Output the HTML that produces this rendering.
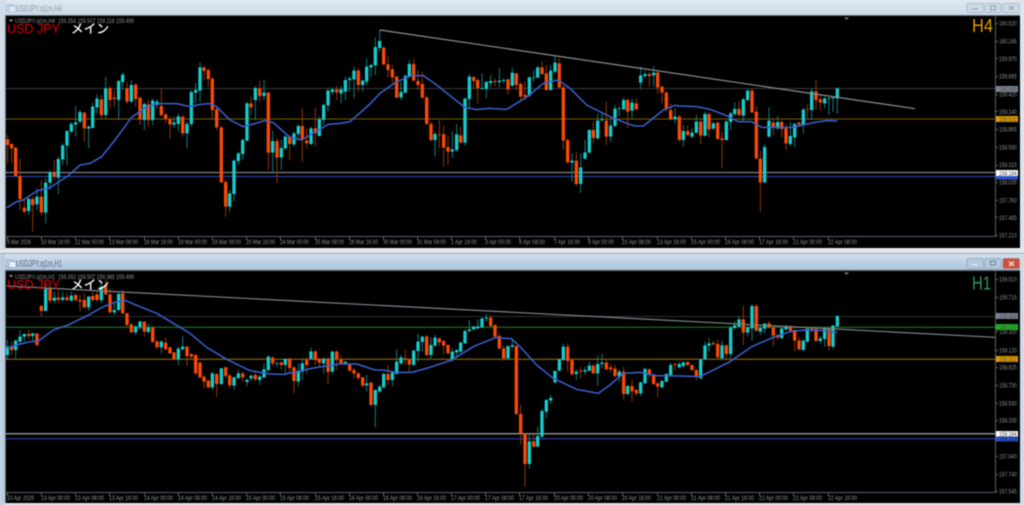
<!DOCTYPE html>
<html><head><meta charset="utf-8"><style>
html,body{margin:0;padding:0;width:1024px;height:505px;overflow:hidden;background:#e4e8ec}
svg{display:block;filter:blur(.4px)}
text{font-family:"Liberation Sans","Noto Sans CJK JP",sans-serif}
.ax{font-size:6.6px;fill:#8f8f8f}
.tg{font-size:6.6px;fill:#444}
.w{fill:none;stroke-width:2.6}
.b{fill:none;stroke-width:10}
.wo{stroke:#a83c05}.wc{stroke:#0f8f90}.bo{stroke:#fb4a05}.bc{stroke:#16cccc}
.ma{fill:none;stroke:#3a5fd0;stroke-width:4.6;stroke-linejoin:round}
</style></head><body>
<svg width="1024" height="505" viewBox="0 0 1024 505" xmlns="http://www.w3.org/2000/svg">
<defs>
<linearGradient id="t1" x1="0" y1="0" x2="0" y2="1"><stop offset="0" stop-color="#dfe8f1"/><stop offset="1" stop-color="#c9d8e7"/></linearGradient>
<linearGradient id="t2" x1="0" y1="0" x2="0" y2="1"><stop offset="0" stop-color="#d3e1ef"/><stop offset="1" stop-color="#a9c3dd"/></linearGradient>
</defs>
<rect width="1024" height="505" fill="#e6e9ec"/>
<!-- window 1 -->
<rect x="0" y="0" width="1024" height="16" fill="url(#t1)"/>
<rect x="0" y="0" width="6" height="250" fill="#cfdbe7"/>
<rect x="1020" y="0" width="4" height="250" fill="#dde5ed"/>
<rect x="5" y="15" width="1015" height="233" fill="#000"/>
<rect x="5" y="15" width="1015" height="1" fill="#6b6f74"/>
<rect x="5" y="15" width="1" height="233" fill="#6b6f74"/>
<rect x="6.5" y="4.5" width="7" height="7" rx="1" fill="#c5d8ec" stroke="#a5bdd5" stroke-width=".8"/>
<rect x="9" y="6" width="7" height="6" rx="1" fill="#dbe8f4" stroke="#a5bdd5" stroke-width=".8"/>
<text x="16" y="11.500" font-size="9" fill="#8f9ba8" textLength="46" lengthAdjust="spacingAndGlyphs">USDJPY.oj1m,H4</text>
<g fill="#ccd9e6" stroke="#a5b4c4" stroke-width=".7">
<rect x="967" y="3.500" width="16.500" height="9" rx="1.500"/><rect x="985" y="3.500" width="16" height="9" rx="1.500"/><rect x="1003" y="3.500" width="16.500" height="9" rx="1.500"/>
</g>
<g fill="none" stroke="#8b98a6" stroke-width=".9"><path d="M972 9h6"/><rect x="990.500" y="6" width="5" height="4"/><path d="M1009 6l5 4M1014 6l-5 4"/></g>
<!-- window 2 frame -->
<rect x="0" y="252" width="1024" height="253" fill="#d9e3ec"/>
<rect x="0" y="253" width="1024" height="1" fill="#a8acb0"/>
<rect x="0" y="254" width="1024" height="16" fill="url(#t2)"/>
<rect x="0" y="254" width="5" height="251" fill="#b9cde0"/>
<rect x="1020" y="254" width="4" height="251" fill="#cfdce8"/>
<rect x="5" y="270" width="1015" height="233" fill="#000"/>
<rect x="5" y="270" width="1015" height="1.200" fill="#4d5158"/>
<rect x="5" y="270" width="1" height="233" fill="#5e6268"/>
<rect x="6.500" y="260" width="7" height="7" rx="1" fill="#bcd3ea" stroke="#8fa9c4" stroke-width=".8"/>
<rect x="9" y="261.500" width="7" height="6" rx="1" fill="#eaf1f8" stroke="#8fa9c4" stroke-width=".8"/>
<text x="16" y="266.500" font-size="9" fill="#566678" textLength="46" lengthAdjust="spacingAndGlyphs">USDJPY.oj1m,H1</text>
<rect x="967" y="258.500" width="16.500" height="10" rx="1.500" fill="#b5cade" stroke="#8fa3b7" stroke-width=".7"/>
<rect x="985" y="258.500" width="16" height="10" rx="1.500" fill="#b5cade" stroke="#8fa3b7" stroke-width=".7"/>
<rect x="1003" y="258.500" width="16.500" height="10" rx="1.500" fill="#c9513c" stroke="#a8796e" stroke-width=".7"/>
<g fill="none" stroke-width=".9"><path d="M972 264.500h6" stroke="#eef2f6"/><rect x="990.500" y="261" width="5" height="4" stroke="#6c7c8c"/><path d="M1009 261.500l5 4.500M1014 261.500l-5 4.500" stroke="#f3e3df" stroke-width="1.300"/></g>

<!-- chart 1 horizontal lines -->
<g shape-rendering="crispEdges">
<rect x="6" y="88" width="989" height="1" fill="#3a3a3a"/>
<rect x="6" y="118.500" width="989" height="1.200" fill="#7a5c06"/>
<rect x="6" y="172" width="989" height="1.200" fill="#9a9a9a"/>
<rect x="6" y="176" width="989" height="1" fill="#2b49b0"/>
</g>

<!-- chart 1 A -->
<g transform="scale(.33333)">
<path class="w wo" d="M23 405V490M35 430V490M47 440V528M60 475V630M73 595V640M98 590V695M124 540V645M163 480V540M253 335V425M304 285V358M330 258V325M343 270V320M381 245V312M407 250V320M420 290V375M445 300V380M484 265V350M497 340V370M510 350V415M548 345V410M612 198V240M625 205V260M637 232V355M650 320V390M664 378V550M677 540V650M753 290V345M779 243V305M805 276V510M831 415V550M869 405V480M907 325V485M920 385V445M946 323V440M1010 258V300"/>
<path class="w wc" d="M86 590V645M111 565V630M137 535V670M150 510V570M175 470V582M188 430V495M201 390V495M214 365V400M227 318V410M240 330V370M266 375V445M278 308V385M291 283V340M317 230V355M356 240V360M368 218V270M394 240V310M433 308V390M458 295V375M471 298V325M522 350V385M535 340V395M561 365V445M574 270V380M587 250V310M600 188V305M689 570V635M702 478V603M715 455V495M728 415V480M741 305V425M766 258V360M792 238V300M818 393V520M844 420V510M856 405V450M882 395V440M895 372V420M933 380V435M958 350V410M971 310V375M984 265V335M997 262V285"/>
<path class="b bo" d="M23 418V435M35 432V445M47 443V528M60 528V597M73 623V635M98 597V615M124 590V637M163 517V530M253 338V385M304 298V345M330 264V300M343 293V297M381 265V305M407 254V297M420 293V358M445 313V360M484 318V345M497 343V357M510 357V373M548 350V400M612 202V213M625 210V237M637 236V330M650 328V382M664 382V547M677 546V620M753 310V322M779 265V288M805 278V458M831 423V473M869 410V432M907 378V420M920 422V430M946 385V400M1010 268V277"/>
<path class="b bc" d="M86 597V633M111 590V613M137 548V638M150 517V548M175 477V533M188 436V478M201 393V437M214 372V395M227 367V374M240 336V365M266 380V386M278 320V384M291 296V322M317 265V345M356 243V300M368 224V246M394 255V305M433 312V360M458 302V360M471 305V315M522 368V374M535 349V372M561 372V400M574 276V372M587 270V278M600 202V272M689 580V620M702 482V582M715 460V483M728 420V462M741 310V422M766 264V300M792 278V288M818 423V458M844 444V472M856 410V445M882 400V433M895 378V402M933 385V432M958 358V408M971 315V360M984 272V316M997 268V276"/>
</g>
<!-- chart 1 B -->
<g transform="translate(340,0) scale(.33333)">
<path class="w wo" d="M55 205V275M131 140V195M144 168V232M157 195V250M170 225V295M221 175V245M234 210V270M247 215V296M260 285V375M273 365V425M298 360V445M311 378V500M324 410V495M362 380V430M401 228V265M413 235V310M465 235V260M504 235V283M529 218V270M542 245V305M555 245V300M606 185V225M619 195V272M658 175V265M670 258V450M683 415V490M709 455V558M760 365V430M799 305V435M863 295V385M889 295V330M928 215V260M953 215V282M966 258V310M979 275V335M992 310V362M1018 345V425"/>
<path class="w wc" d="M3 258V310M16 230V300M29 230V275M42 200V295M68 238V275M80 175V255M93 190V230M106 113V225M119 90V155M183 245V300M196 222V280M208 180V232M285 395V470M337 395V475M350 372V455M375 293V437M388 222V325M426 220V268M439 243V295M452 225V262M478 205V262M491 235V250M517 203V260M568 228V290M581 210V245M593 198V235M632 195V272M645 168V220M696 460V545M722 460V578M735 420V478M748 388V460M773 340V418M786 340V365M812 355V425M825 315V380M838 320V350M851 292V330M876 295V357M902 200V268M915 212V235M941 198V260M1005 325V370"/>
<path class="b bo" d="M55 212V255M131 143V193M144 193V210M157 208V232M170 230V293M221 192V242M234 243V255M247 252V293M260 292V372M273 372V420M298 403V405M311 403V443M324 441V455M362 406V428M401 231V243M413 240V264M465 243V246M504 238V268M529 220V255M542 252V290M555 285V290M606 202V222M619 220V270M658 190V262M670 262V422M683 420V487M709 482V552M760 390V414M799 362V410M863 300V335M889 310V328M928 222V228M953 218V262M966 260V278M979 278V328M992 330V358M1018 350V420"/>
<path class="b bc" d="M3 268V280M16 240V275M29 235V240M42 212V238M68 242V255M80 200V245M93 195V202M106 141V196M119 123V144M183 276V292M196 228V278M208 192V230M285 402V420M337 448V455M350 403V450M375 296V428M388 230V297M426 264V267M439 246V267M452 243V249M478 242V246M491 240V243M517 218V257M568 232V288M581 231V233M593 202V233M632 212V270M645 188V215M696 482V488M722 502V552M735 457V476M748 390V458M773 362V415M786 359V361M812 377V410M825 326V378M838 324V326M851 300V328M876 308V332M902 226V248M915 222V228M941 218V226M1005 350V358"/>
</g>
<!-- chart 1 C -->
<g transform="translate(680,0) scale(.33333)">
<path class="w wo" d="M23 375V410M62 360V432M87 338V412M113 365V420M126 395V505M177 305V350M216 265V340M229 318V478M241 452V635M280 355V405M305 360V412M318 372V450M357 365V378M382 312V358M408 238V328M421 285V332"/>
<path class="w wc" d="M10 375V440M36 385V415M49 345V402M75 335V410M100 365V390M139 360V422M152 335V390M164 307V348M190 292V365M203 268V303M254 433V550M267 322V412M293 348V390M331 365V438M344 368V442M370 322V402M395 265V360M434 290V325M447 292V345M459 292V335M472 262V342"/>
<path class="b bo" d="M23 393V405M62 365V407M87 342V388M113 368V417M126 415V420M177 327V345M216 272V337M229 335V475M241 476V547M280 368V380M305 366V387M318 385V430M357 368V374M382 327V329M408 274V300M421 298V307"/>
<path class="b bc" d="M10 393V420M36 398V410M49 365V398M75 342V407M100 370V386M139 365V420M152 340V366M164 327V342M190 298V347M203 272V300M254 441V547M267 362V410M293 366V385M331 408V432M344 372V412M370 329V373M395 274V330M434 295V310M447 294V296M459 293V295M472 265V295"/>
</g>
<!-- chart 1 MA -->
<g transform="scale(.33333)"><path class="ma" d="M20 623L50 605L70 600L110 573L150 563L205 527L240 495L270 490L305 470L345 420L395 352L440 320L480 311L530 311L570 320L600 313L630 311L650 320L690 360L730 380L760 372L795 362L820 368L870 412L905 420L930 405L985 373L1020 370L1050 365L1110 312L1140 280L1190 245L1235 227L1270 227L1310 255L1360 295L1395 322L1430 329L1465 325L1520 328L1550 310L1585 288L1630 250L1675 240L1710 265L1760 315L1830 350L1880 370L1905 378L1930 378L1990 330L2025 316L2040 318L2090 320L2130 328L2180 347L2215 365L2255 365L2285 382L2380 382L2440 368L2480 362L2512 363"/></g>
<!-- trendline -->
<line x1="380" y1="30" x2="915" y2="108.700" stroke="#8a8f96" stroke-width="1.200"/>

<!-- chart 1 axes -->
<g shape-rendering="crispEdges" fill="#5a5f65">
<rect x="995" y="16" width="1" height="220"/><rect x="6" y="236" width="990" height="1"/>
<path d="M995 23h3v1h-3zM995 41h3v1h-3zM995 58h3v1h-3zM995 76h3v1h-3zM995 94h3v1h-3zM995 111h3v1h-3zM995 129h3v1h-3zM995 147h3v1h-3zM995 165h3v1h-3zM995 182h3v1h-3zM995 200h3v1h-3zM995 217h3v1h-3zM995 235h3v1h-3z"/>
<path d="M7 237h1v3H7zM41 237h1v3h-1zM75 237h1v3h-1zM109 237h1v3h-1zM144 237h1v3h-1zM178 237h1v3h-1zM212 237h1v3h-1zM246 237h1v3h-1zM280 237h1v3h-1zM315 237h1v3h-1zM349 237h1v3h-1zM383 237h1v3h-1zM417 237h1v3h-1zM451 237h1v3h-1zM485 237h1v3h-1zM519 237h1v3h-1zM554 237h1v3h-1zM588 237h1v3h-1zM622 237h1v3h-1zM657 237h1v3h-1zM691 237h1v3h-1zM725 237h1v3h-1zM759 237h1v3h-1zM793 237h1v3h-1zM828 237h1v3h-1z"/>
</g>
<g class="ax" lengthAdjust="spacingAndGlyphs">
<text x="999" y="25.500" textLength="17.700" lengthAdjust="spacingAndGlyphs">160.520</text><text x="999" y="43.500" textLength="17.700" lengthAdjust="spacingAndGlyphs">160.245</text><text x="999" y="61" textLength="17.700" lengthAdjust="spacingAndGlyphs">159.970</text><text x="999" y="78.500" textLength="17.700" lengthAdjust="spacingAndGlyphs">159.695</text><text x="999" y="96.500" textLength="17.700" lengthAdjust="spacingAndGlyphs">159.420</text><text x="999" y="114" textLength="17.700" lengthAdjust="spacingAndGlyphs">159.140</text><text x="999" y="131.500" textLength="17.700" lengthAdjust="spacingAndGlyphs">158.865</text><text x="999" y="149.500" textLength="17.700" lengthAdjust="spacingAndGlyphs">158.590</text><text x="999" y="167" textLength="17.700" lengthAdjust="spacingAndGlyphs">158.315</text><text x="999" y="184.500" textLength="17.700" lengthAdjust="spacingAndGlyphs">158.035</text><text x="999" y="202.500" textLength="17.700" lengthAdjust="spacingAndGlyphs">157.760</text><text x="999" y="220" textLength="17.700" lengthAdjust="spacingAndGlyphs">157.485</text><text x="999" y="237.500" textLength="17.700" lengthAdjust="spacingAndGlyphs">157.210</text>
</g>
<rect x="996" y="86" width="22" height="6" fill="#7b8794"/><text x="999" y="91.300" class="tg" textLength="17.700" lengthAdjust="spacingAndGlyphs">159.499</text>
<rect x="996" y="116" width="22" height="6" fill="#e39c00"/><text x="999" y="121.300" class="tg" textLength="17.700" lengthAdjust="spacingAndGlyphs">159.022</text>
<rect x="996" y="170" width="22" height="6" fill="#fff"/><text x="999" y="175.300" class="tg" textLength="17.700" lengthAdjust="spacingAndGlyphs">158.184</text>
<rect x="996" y="176" width="22" height="3.500" fill="#2a52c5"/>
<g class="ax">
<text x="7" y="244" textLength="24" lengthAdjust="spacingAndGlyphs">9 Mar 2026</text><text x="41" y="244" textLength="29" lengthAdjust="spacingAndGlyphs">10 Mar 16:00</text><text x="75" y="244" textLength="29" lengthAdjust="spacingAndGlyphs">12 Mar 00:00</text><text x="109" y="244" textLength="29" lengthAdjust="spacingAndGlyphs">13 Mar 08:00</text><text x="144" y="244" textLength="29" lengthAdjust="spacingAndGlyphs">16 Mar 16:00</text><text x="178" y="244" textLength="29" lengthAdjust="spacingAndGlyphs">18 Mar 00:00</text><text x="212" y="244" textLength="29" lengthAdjust="spacingAndGlyphs">19 Mar 08:00</text><text x="246" y="244" textLength="29" lengthAdjust="spacingAndGlyphs">20 Mar 16:00</text><text x="280" y="244" textLength="29" lengthAdjust="spacingAndGlyphs">24 Mar 00:00</text><text x="315" y="244" textLength="29" lengthAdjust="spacingAndGlyphs">25 Mar 08:00</text><text x="349" y="244" textLength="29" lengthAdjust="spacingAndGlyphs">26 Mar 16:00</text><text x="383" y="244" textLength="29" lengthAdjust="spacingAndGlyphs">30 Mar 00:00</text><text x="417" y="244" textLength="29" lengthAdjust="spacingAndGlyphs">31 Mar 08:00</text><text x="451" y="244" textLength="26" lengthAdjust="spacingAndGlyphs">1 Apr 16:00</text><text x="485" y="244" textLength="26" lengthAdjust="spacingAndGlyphs">3 Apr 00:00</text><text x="519" y="244" textLength="26" lengthAdjust="spacingAndGlyphs">6 Apr 08:00</text><text x="554" y="244" textLength="26" lengthAdjust="spacingAndGlyphs">7 Apr 16:00</text><text x="588" y="244" textLength="26" lengthAdjust="spacingAndGlyphs">9 Apr 00:00</text><text x="622" y="244" textLength="29" lengthAdjust="spacingAndGlyphs">10 Apr 08:00</text><text x="657" y="244" textLength="29" lengthAdjust="spacingAndGlyphs">13 Apr 16:00</text><text x="691" y="244" textLength="29" lengthAdjust="spacingAndGlyphs">15 Apr 00:00</text><text x="725" y="244" textLength="29" lengthAdjust="spacingAndGlyphs">16 Apr 08:00</text><text x="759" y="244" textLength="29" lengthAdjust="spacingAndGlyphs">17 Apr 16:00</text><text x="793" y="244" textLength="29" lengthAdjust="spacingAndGlyphs">21 Apr 00:00</text><text x="828" y="244" textLength="29" lengthAdjust="spacingAndGlyphs">22 Apr 08:00</text>
</g>
<path d="M844 17.500h5l-2.500 2.500z" fill="#777"/>
<path d="M9 19.500h4l-2 2.500z" fill="#999"/>
<text x="15" y="23" class="ax" textLength="40" lengthAdjust="spacingAndGlyphs">USDJPY.oj1m,H4</text>
<text x="58" y="23" class="ax" textLength="76" lengthAdjust="spacingAndGlyphs">159.354 159.507 159.116 159.499</text>
<text x="7" y="33" font-size="12.600" fill="#e00000" textLength="53" lengthAdjust="spacingAndGlyphs">USD JPY</text>
<text x="71" y="33" font-size="12.500" fill="#fff" stroke="#fff" stroke-width=".25" textLength="38">メイン</text>
<text x="972" y="32" font-size="18" fill="#e39a00" textLength="21" lengthAdjust="spacingAndGlyphs">H4</text>

<!-- chart 2 lines -->
<g shape-rendering="crispEdges">
<rect x="6" y="316" width="989" height="1" fill="#2e2e2e"/>
<rect x="6" y="326.500" width="989" height="1.300" fill="#175a17"/>
<rect x="6" y="358.500" width="989" height="1.300" fill="#6b4f08"/>
<rect x="6" y="433" width="989" height="1.300" fill="#8a8a8a"/>
<rect x="6" y="438" width="989" height="1.300" fill="#1d2f80"/>
</g>
<!-- chart 2 A -->
<g transform="translate(0,250) scale(.33333)">
<path class="w wo" d="M35 275V315M86 240V268M111 250V290M124 165V200M150 105V160M175 120V158M201 128V155M227 130V155M240 135V183M253 130V175M278 125V155M291 125V155M317 90V135M330 115V190M368 120V193M381 187V230M394 220V250M433 213V258M458 230V278M471 270V295M497 262V300M510 290V312M522 305V330M561 288V348M574 310V330M587 313V375M600 335V384M612 375V415M625 390V415M650 370V442M677 350V385M689 372V415M728 365V395M766 365V395M818 318V348M844 335V362M869 324V370M882 350V430M920 322V372M946 300V345M958 325V350M984 322V402M1010 300V360"/>
<path class="w wc" d="M22 270V330M47 268V325M60 240V280M73 250V275M98 248V272M137 100V183M163 125V158M188 125V155M214 125V155M266 138V182M304 95V160M343 160V195M356 125V183M407 225V255M420 212V240M445 220V250M484 270V310M535 290V345M548 258V300M637 365V420M664 352V405M702 380V420M715 360V388M741 385V408M753 374V392M779 375V405M792 340V385M805 315V365M831 335V350M856 325V375M895 340V410M907 325V390M933 292V330M971 322V370M997 302V370"/>
<path class="b bo" d="M35 290V300M86 252V258M111 250V285M124 168V183M150 113V152M175 143V150M201 142V150M227 135V150M240 150V155M253 150V172M278 138V150M291 133V150M317 105V133M330 133V187M368 130V190M381 190V225M394 223V247M433 215V245M458 232V276M471 274V292M497 278V298M510 292V310M522 307V328M561 290V318M574 312V320M587 315V370M600 338V382M612 380V395M625 392V412M650 372V402M677 352V378M689 376V406M728 370V382M766 375V388M818 323V340M844 337V345M869 326V354M882 352V393M920 330V345M946 304V330M958 326V338M984 326V366M1010 305V328"/>
<path class="b bc" d="M22 290V315M47 272V300M60 260V275M73 252V260M98 250V258M137 113V183M163 143V152M188 142V150M214 137V152M266 140V172M304 110V150M343 180V187M356 132V180M407 230V247M420 215V232M445 232V246M484 275V292M535 296V328M548 290V298M637 370V412M664 355V402M702 382V407M715 370V384M741 390V396M753 377V385M779 380V390M792 358V382M805 320V360M831 340V342M856 327V345M895 362V395M907 340V365M933 304V327M971 326V340M997 305V365"/>
</g>
<!-- chart 2 B -->
<g transform="translate(340,250) scale(.33333)">
<path class="w wo" d="M3 318V345M29 340V365M42 355V385M55 365V390M68 380V412M93 395V467M144 345V405M196 298V345M208 325V365M260 255V318M298 263V290M311 270V312M324 283V312M452 195V232M465 223V265M478 250V298M491 285V332M529 285V495M542 463V585M555 550V710M581 552V592M683 280V365M696 328V375M722 350V385M760 342V372M799 325V360M812 342V368M825 345V382M851 350V450M876 390V455M889 415V437M928 355V385M941 372V405M953 395V442M1005 338V360"/>
<path class="w wc" d="M16 335V345M80 375V425M106 418V532M119 405V428M131 368V415M157 365V408M170 298V373M183 315V345M221 298V347M234 250V335M247 258V305M273 262V325M285 255V290M337 295V335M350 298V320M362 274V310M375 238V282M388 210V248M401 228V240M413 208V237M426 203V235M439 192V215M504 286V328M517 268V295M568 552V655M593 530V592M606 478V563M619 448V505M632 435V460M645 360V400M658 325V365M670 280V333M709 358V390M735 350V375M748 335V365M773 318V408M786 312V355M838 358V395M863 405V435M902 395V438M915 352V402M966 390V415M979 370V398M992 338V378M1018 335V355"/>
<path class="b bo" d="M3 328V340M29 342V362M42 360V370M55 370V384M68 382V407M93 398V465M144 372V390M196 325V330M208 328V344M260 260V315M298 265V277M311 273V287M324 285V310M452 203V228M465 225V260M478 258V295M491 295V325M529 288V492M542 492V552M555 552V642M581 574V590M683 290V333M696 330V373M722 362V365M760 347V370M799 338V358M812 352V358M825 356V378M851 365V432M876 408V424M889 420V430M928 358V375M941 375V402M953 400V410M1005 342V345"/>
<path class="b bc" d="M16 335V340M80 400V406M106 420V465M119 410V425M131 372V412M157 368V390M170 335V372M183 322V340M221 302V345M234 275V303M247 260V276M273 285V315M285 263V287M337 305V328M350 300V307M362 278V305M375 243V280M388 238V243M401 230V238M413 229V235M426 205V232M439 203V206M504 288V325M517 285V290M568 574V642M593 558V590M606 483V560M619 450V485M632 444V452M645 363V397M658 328V362M670 290V330M709 365V372M735 360V365M748 347V362M773 342V370M786 338V342M838 365V380M863 408V432M902 397V430M915 357V400M966 393V412M979 372V395M992 345V375M1018 342V352"/>
</g>
<!-- chart 2 C -->
<g transform="translate(680,250) scale(.33333)">
<path class="w wo" d="M23 334V348M36 343V362M49 358V390M100 272V285M113 268V325M139 284V325M190 167V285M229 162V245M267 212V235M280 230V288M293 252V270M331 226V248M344 238V305M357 262V300M395 232V248M408 235V275M447 232V302"/>
<path class="w wc" d="M10 335V355M62 326V387M75 275V330M87 265V305M126 272V328M152 230V325M164 213V238M177 198V232M203 225V260M216 163V272M241 225V255M254 218V250M305 230V268M318 225V243M370 268V302M382 232V278M421 258V280M434 232V290M459 225V296M472 196V234"/>
<path class="b bo" d="M23 336V345M36 345V360M49 360V380M100 279V283M113 282V322M139 286V312M190 208V248M229 168V242M267 220V232M280 232V257M293 255V263M331 228V242M344 240V272M357 272V298M395 236V238M408 237V273M447 237V288"/>
<path class="b bc" d="M10 337V348M62 328V385M75 286V328M87 280V287M126 286V325M152 232V312M164 226V234M177 208V230M203 233V248M216 168V235M241 234V245M254 221V236M305 236V264M318 230V238M370 272V300M382 236V275M421 265V273M434 237V267M459 227V290M472 198V229"/>
</g>
<!-- chart 2 MA -->
<g transform="translate(0,250) scale(.33333)"><path class="ma" d="M20 295L50 285L85 276L115 273L160 240L205 225L260 198L310 170L350 155L375 151L420 170L470 190L520 220L570 250L620 292L680 328L750 362L810 372L850 373L890 365L950 352L1000 345L1020 342L1070 342L1125 360L1150 360L1190 367L1235 367L1290 352L1355 330L1420 290L1485 263L1535 266L1565 295L1610 345L1660 385L1730 418L1795 430L1830 405L1870 370L1920 367L1970 377L2040 378L2100 380L2190 335L2255 290L2320 262L2370 245L2420 240L2470 242L2512 247"/></g>
<!-- trendline 2 -->
<line x1="7" y1="286" x2="995" y2="337.300" stroke="#7d828a" stroke-width="1.200"/>

<!-- chart 2 axes -->
<g shape-rendering="crispEdges" fill="#5a5f65">
<rect x="995" y="271" width="1" height="221"/><rect x="6" y="492" width="990" height="1"/>
<path d="M995 279h3v1h-3zM995 297h3v1h-3zM995 331h3v1h-3zM995 350h3v1h-3zM995 367h3v1h-3zM995 385h3v1h-3zM995 403h3v1h-3zM995 420h3v1h-3zM995 456h3v1h-3zM995 474h3v1h-3zM995 491h3v1h-3z"/>
<path d="M7 493h1v3H7zM41 493h1v3h-1zM75 493h1v3h-1zM109 493h1v3h-1zM144 493h1v3h-1zM178 493h1v3h-1zM212 493h1v3h-1zM246 493h1v3h-1zM280 493h1v3h-1zM315 493h1v3h-1zM349 493h1v3h-1zM383 493h1v3h-1zM417 493h1v3h-1zM451 493h1v3h-1zM485 493h1v3h-1zM519 493h1v3h-1zM554 493h1v3h-1zM588 493h1v3h-1zM622 493h1v3h-1zM657 493h1v3h-1zM691 493h1v3h-1zM725 493h1v3h-1zM759 493h1v3h-1zM793 493h1v3h-1zM828 493h1v3h-1z"/>
</g>
<g class="ax">
<text x="999" y="281.500" textLength="17.700" lengthAdjust="spacingAndGlyphs">159.910</text><text x="999" y="299.500" textLength="17.700" lengthAdjust="spacingAndGlyphs">159.715</text><text x="999" y="334" textLength="17.700" lengthAdjust="spacingAndGlyphs">159.320</text><text x="999" y="352.500" textLength="17.700" lengthAdjust="spacingAndGlyphs">159.120</text><text x="999" y="369.500" textLength="17.700" lengthAdjust="spacingAndGlyphs">158.925</text><text x="999" y="387.500" textLength="17.700" lengthAdjust="spacingAndGlyphs">158.730</text><text x="999" y="405.500" textLength="17.700" lengthAdjust="spacingAndGlyphs">158.530</text><text x="999" y="422.500" textLength="17.700" lengthAdjust="spacingAndGlyphs">158.335</text><text x="999" y="458.500" textLength="17.700" lengthAdjust="spacingAndGlyphs">157.940</text><text x="999" y="476.500" textLength="17.700" lengthAdjust="spacingAndGlyphs">157.740</text><text x="999" y="493.500" textLength="17.700" lengthAdjust="spacingAndGlyphs">157.545</text>
</g>
<rect x="996" y="313" width="22" height="6" fill="#7b8794"/><text x="999" y="318.300" class="tg" textLength="17.700" lengthAdjust="spacingAndGlyphs">159.499</text>
<rect x="996" y="324" width="22" height="6" fill="#1fb01f"/><text x="999" y="329.300" class="tg" textLength="17.700" lengthAdjust="spacingAndGlyphs">159.377</text>
<rect x="996" y="356" width="22" height="6" fill="#e39c00"/><text x="999" y="361.300" class="tg" textLength="17.700" lengthAdjust="spacingAndGlyphs">159.022</text>
<rect x="996" y="431" width="22" height="5.500" fill="#fff"/><text x="999" y="436" class="tg" textLength="17.700" lengthAdjust="spacingAndGlyphs">158.184</text>
<rect x="996" y="436.500" width="22" height="5" fill="#2a52c5"/><text x="999" y="441" class="tg" style="fill:#16265e" textLength="17.700" lengthAdjust="spacingAndGlyphs">158.113</text>
<g class="ax">
<text x="7" y="500" textLength="27" lengthAdjust="spacingAndGlyphs">10 Apr 2026</text><text x="41" y="500" textLength="29" lengthAdjust="spacingAndGlyphs">13 Apr 00:00</text><text x="75" y="500" textLength="29" lengthAdjust="spacingAndGlyphs">13 Apr 08:00</text><text x="109" y="500" textLength="29" lengthAdjust="spacingAndGlyphs">13 Apr 16:00</text><text x="144" y="500" textLength="29" lengthAdjust="spacingAndGlyphs">14 Apr 00:00</text><text x="178" y="500" textLength="29" lengthAdjust="spacingAndGlyphs">14 Apr 08:00</text><text x="212" y="500" textLength="29" lengthAdjust="spacingAndGlyphs">14 Apr 16:00</text><text x="246" y="500" textLength="29" lengthAdjust="spacingAndGlyphs">15 Apr 00:00</text><text x="280" y="500" textLength="29" lengthAdjust="spacingAndGlyphs">15 Apr 08:00</text><text x="315" y="500" textLength="29" lengthAdjust="spacingAndGlyphs">15 Apr 16:00</text><text x="349" y="500" textLength="29" lengthAdjust="spacingAndGlyphs">16 Apr 00:00</text><text x="383" y="500" textLength="29" lengthAdjust="spacingAndGlyphs">16 Apr 08:00</text><text x="417" y="500" textLength="29" lengthAdjust="spacingAndGlyphs">16 Apr 16:00</text><text x="451" y="500" textLength="29" lengthAdjust="spacingAndGlyphs">17 Apr 00:00</text><text x="485" y="500" textLength="29" lengthAdjust="spacingAndGlyphs">17 Apr 08:00</text><text x="519" y="500" textLength="29" lengthAdjust="spacingAndGlyphs">17 Apr 16:00</text><text x="554" y="500" textLength="29" lengthAdjust="spacingAndGlyphs">20 Apr 00:00</text><text x="588" y="500" textLength="29" lengthAdjust="spacingAndGlyphs">20 Apr 08:00</text><text x="622" y="500" textLength="29" lengthAdjust="spacingAndGlyphs">20 Apr 16:00</text><text x="657" y="500" textLength="29" lengthAdjust="spacingAndGlyphs">21 Apr 00:00</text><text x="691" y="500" textLength="29" lengthAdjust="spacingAndGlyphs">21 Apr 08:00</text><text x="725" y="500" textLength="29" lengthAdjust="spacingAndGlyphs">21 Apr 16:00</text><text x="759" y="500" textLength="29" lengthAdjust="spacingAndGlyphs">22 Apr 00:00</text><text x="793" y="500" textLength="29" lengthAdjust="spacingAndGlyphs">22 Apr 08:00</text><text x="828" y="500" textLength="29" lengthAdjust="spacingAndGlyphs">22 Apr 16:00</text>
</g>
<path d="M844 272.500h5l-2.500 2.500z" fill="#777"/>
<path d="M9 275h4l-2 2.500z" fill="#999"/>
<text x="15" y="279" class="ax" textLength="40" lengthAdjust="spacingAndGlyphs">USDJPY.oj1m,H1</text>
<text x="58" y="279" class="ax" textLength="76" lengthAdjust="spacingAndGlyphs">159.392 159.507 159.365 159.499</text>
<text x="7" y="289" font-size="12.600" fill="#e00000" textLength="53" lengthAdjust="spacingAndGlyphs">USD JPY</text>
<text x="71" y="289" font-size="12.500" fill="#fff" stroke="#fff" stroke-width=".25" textLength="38">メイン</text>
<text x="972" y="289.500" font-size="18" fill="#2f9a5f" textLength="19" lengthAdjust="spacingAndGlyphs">H1</text>
</svg>
</body></html>
